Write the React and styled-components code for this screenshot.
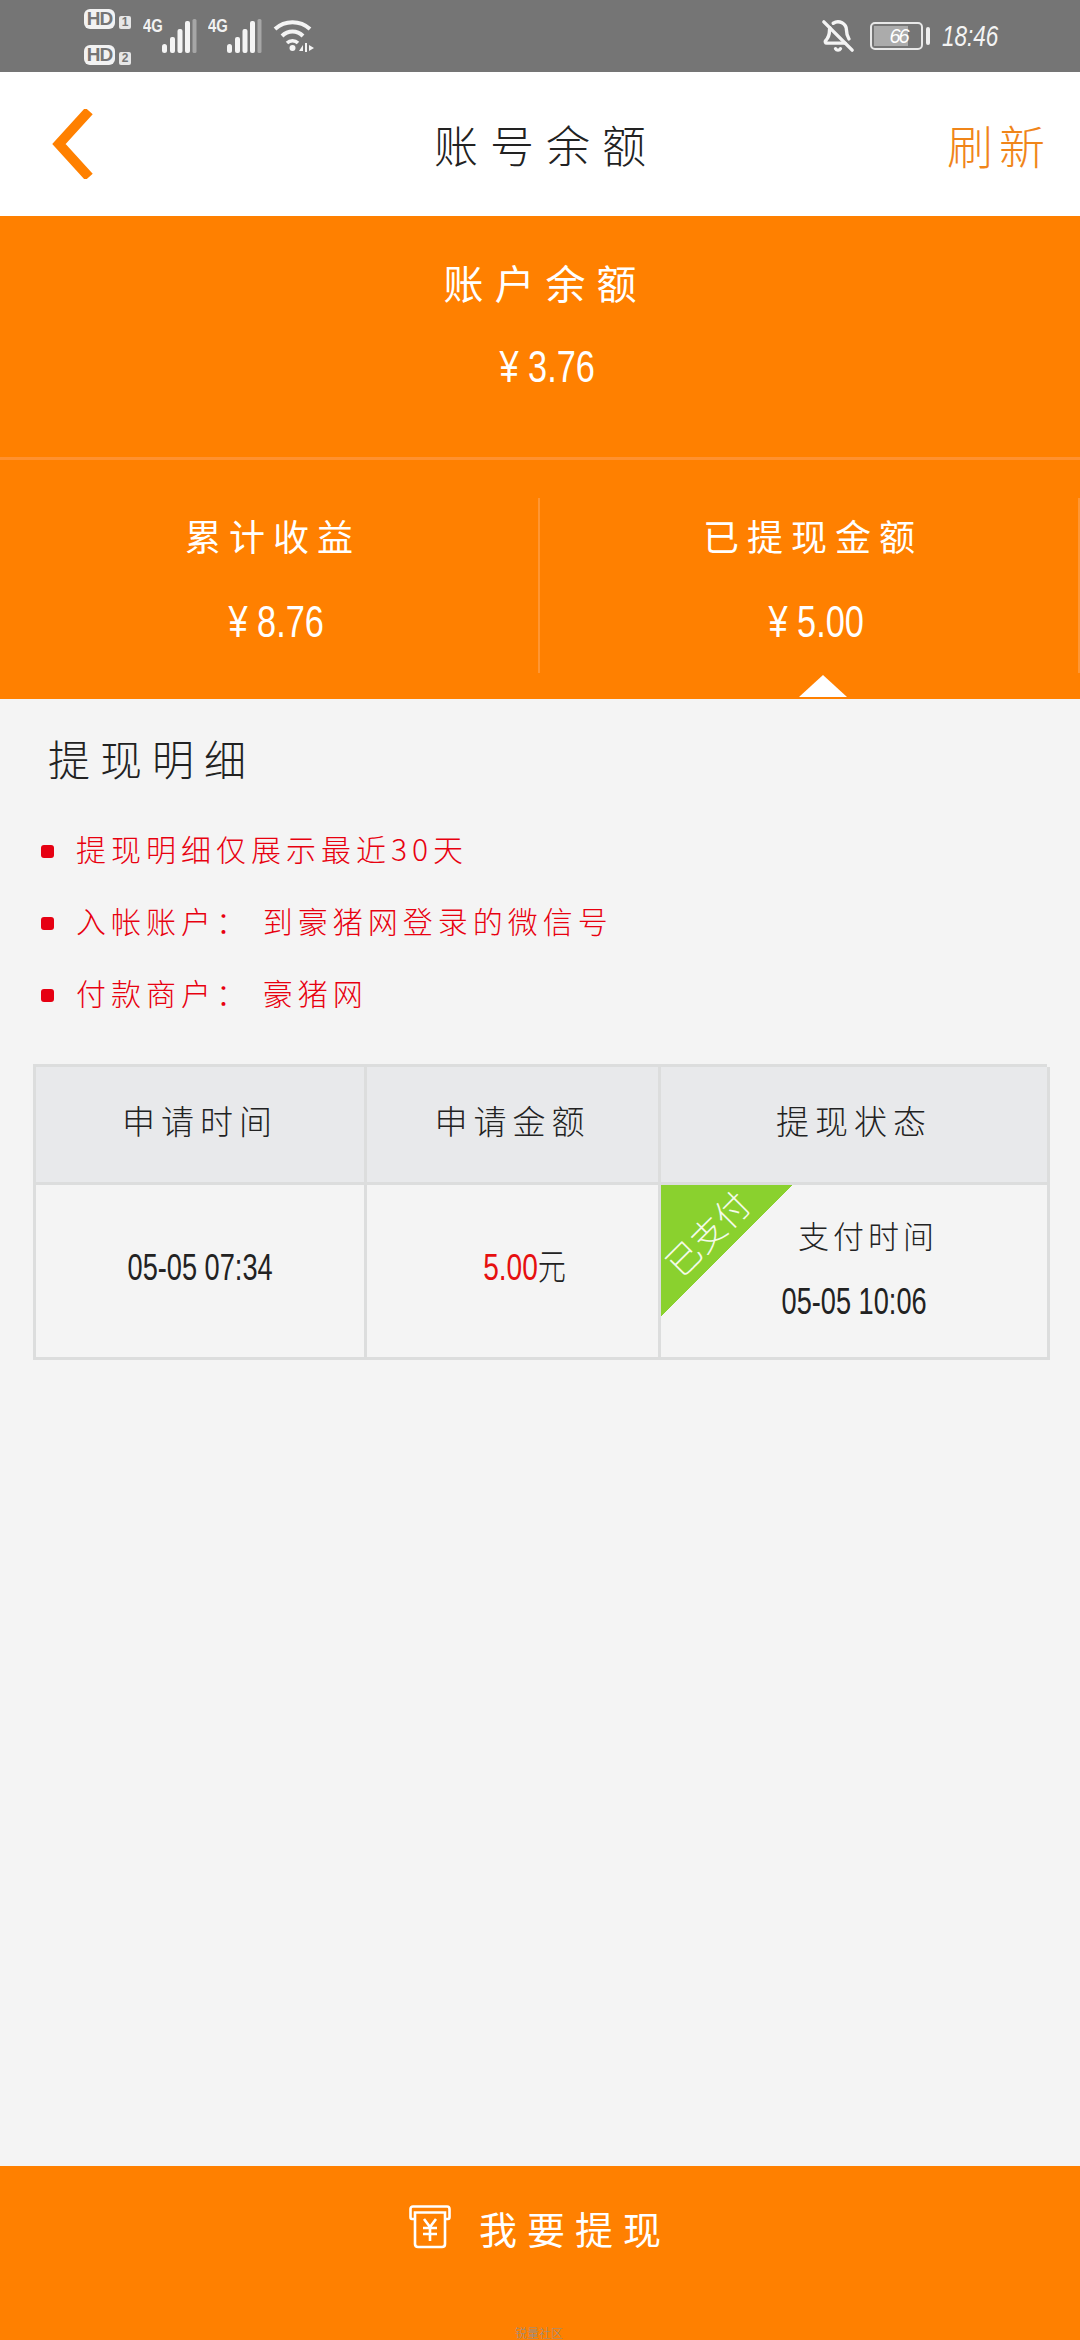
import React from 'react';
import styled, { createGlobalStyle } from 'styled-components';
import { BellOff } from 'lucide-react';

const ORANGE = '#ff8000';
const CJK = `"Noto Sans CJK SC", "Noto Sans", sans-serif`;
const LATIN = `"Liberation Sans", "Noto Sans CJK SC", sans-serif`;

const GlobalStyle = createGlobalStyle`
  html, body { margin: 0; padding: 0; background: #f4f4f4; }
  * { box-sizing: border-box; }
`;

const Page = styled.div`
  position: relative;
  width: 1080px;
  height: 2340px;
  display: flex;
  flex-direction: column;
  overflow: hidden;
  background: #f4f4f4;
  font-family: ${CJK};
  font-weight: 300;
  color: #222;
`;

const StatusBar = styled.div`
  height: 72px;
  flex: none;
  display: flex;
  align-items: center;
  justify-content: space-between;
  padding: 0 85px 0 84px;
  background: #757575;
  color: #fff;
`;

const StatusGroup = styled.div`
  display: flex;
  align-items: center;
`;

const SimColumn = styled.div`
  display: flex;
  flex-direction: column;
  gap: 16px;
  margin: 2px 12px 0 0;
`;

const SimRow = styled.div`
  display: flex;
  align-items: flex-end;
  gap: 4px;
`;

const HdBadge = styled.span`
  width: 31px;
  height: 20px;
  border-radius: 6px;
  background: #f2f2f2;
  color: #757575;
  font: 700 19px/20px "Liberation Sans", sans-serif;
  letter-spacing: -1px;
  text-align: center;
`;

const SimNumber = styled.span`
  width: 12px;
  height: 13px;
  border-radius: 2px;
  background: #e6e6e6;
  color: #757575;
  font: 700 12px/13px "Liberation Sans", sans-serif;
  text-align: center;
`;

const Signal = styled.div`
  display: flex;
  align-items: flex-start;
  margin-right: 10px;
`;

const NetLabel = styled.span`
  width: 19px;
  transform: scaleX(0.78);
  transform-origin: left top;
  font: 700 19px/16px ${LATIN};
  color: #f2f2f2;
`;

const Bell = styled(BellOff)`
  margin-right: 15px;
`;

const Battery = styled.div`
  width: 53px;
  height: 28px;
  padding: 2px;
  border: 2px solid #e8e8e8;
  border-radius: 5px;
`;

const BatteryFill = styled.div`
  height: 100%;
  width: ${p => p.level}%;
  background: #ababab;
  color: #fff;
  font: italic 20px/20px ${LATIN};
  letter-spacing: -2px;
  text-align: right;
`;

const BatteryNub = styled.div`
  width: 4px;
  height: 18px;
  margin: 0 12px 0 3px;
  border-radius: 2px;
  background: #eee;
`;

const Clock = styled.span`
  width: 53px;
  white-space: nowrap;
  transform: scaleX(0.75);
  transform-origin: left center;
  font: italic 300 30px/1 ${LATIN};
  color: #f4f4f4;
`;

const Header = styled.header`
  height: 144px;
  flex: none;
  display: grid;
  grid-template-columns: 1fr auto 1fr;
  align-items: center;
  padding: 0 33px;
  background: #fff;
`;

const BackSvg = styled.svg`
  margin-left: 19px;
  display: block;
`;

const PageTitle = styled.h1`
  margin: 0;
  padding-left: 12px;
  font-size: 44px;
  font-weight: 300;
  letter-spacing: 12px;
  color: #222;
`;

const Refresh = styled.span`
  justify-self: end;
  margin-right: -4px;
  font-size: 46px;
  letter-spacing: 6px;
  color: #f08519;
`;

const Summary = styled.section`
  flex: none;
  background: ${ORANGE};
  color: #fff;
`;

const Balance = styled.div`
  height: 241px;
  padding-top: 37px;
  display: flex;
  flex-direction: column;
  align-items: center;
`;

const SummaryLabel = styled.div`
  font-size: ${p => (p.big ? 40 : 36)}px;
  font-weight: 400;
  line-height: ${p => (p.big ? 58 : 52)}px;
  letter-spacing: ${p => (p.big ? 11 : 8)}px;
  padding-left: ${p => (p.big ? 11 : 8)}px;
`;

const SummaryValue = styled.div`
  margin: ${p => (p.big ? 34 : 39)}px 0 0 14px;
  transform: scaleX(0.78);
  font: 400 44px/44px ${LATIN};
`;

const Stats = styled.div`
  height: 242px;
  padding-top: 38px;
  border-top: 3px solid #ff9130;
  display: grid;
  grid-template-columns: 540px 540px;
  align-items: start;
`;

const Stat = styled.div`
  position: relative;
  height: 175px;
  padding-top: 11px;
  display: flex;
  flex-direction: column;
  align-items: center;
  border-right: 2px solid #ff9633;
`;

const ActivePointer = styled.div`
  position: absolute;
  left: 259px;
  top: 177px;
  width: 0;
  height: 0;
  border-left: 24px solid transparent;
  border-right: 24px solid transparent;
  border-bottom: 22px solid #fff;
`;

const Details = styled.main`
  flex: 1;
  padding: 0 33px;
`;

const DetailsTitle = styled.h2`
  margin: 29px 0 0 15px;
  font-size: 42px;
  line-height: 60px;
  font-weight: 300;
  letter-spacing: 10px;
  color: #222;
`;

const NoteList = styled.ul`
  margin: 24px 0 0;
  padding: 0;
  list-style: none;
`;

const Note = styled.li`
  height: 72px;
  display: flex;
  align-items: center;
  gap: 22px;
  padding-left: 8px;
  white-space: pre;
  font-size: 30px;
  letter-spacing: 5px;
  color: #e8000f;
`;

const NoteDot = styled.span`
  width: 13px;
  height: 13px;
  flex: none;
  margin-top: 6px;
  border-radius: 3px;
  background: #e60012;
`;

const Table = styled.div`
  margin-top: 36px;
  display: grid;
  grid-template-columns: 331px 294px 389px;
  grid-template-rows: 118px 175px;
  border-top: 3px solid #dcdddd;
  border-left: 3px solid #dcdddd;
`;

const Cell = styled.div`
  position: relative;
  display: flex;
  flex-direction: column;
  align-items: center;
  justify-content: center;
  padding-bottom: ${p => (p.head ? 10 : 6)}px;
  border-right: 3px solid #dcdddd;
  border-bottom: 3px solid #dcdddd;
  background: ${p => (p.head ? '#e8e9eb' : '#f4f4f4')};
`;

const HeadText = styled.span`
  font-size: 33px;
  letter-spacing: 6px;
  color: #222;
`;

const DataText = styled.span`
  white-space: nowrap;
  transform: scaleX(0.755);
  font: 300 36px/34px ${LATIN};
  color: #222;
`;

const Amount = styled.span`
  padding-left: 32px;
  white-space: nowrap;
  transform: scaleX(0.78);
  font: 300 36px/34px ${LATIN};
  color: #222;
`;

const AmountNumber = styled.span`
  color: #e60f0f;
`;

const PayTimeLabel = styled.span`
  margin: 0 0 32px 28px;
  font-size: 31px;
  line-height: 36px;
  letter-spacing: 4px;
  color: #222;
`;

const PaidCorner = styled.div`
  position: absolute;
  left: 0;
  top: 0;
  width: 132px;
  height: 132px;
  background: linear-gradient(135deg, #8ad12e 50%, transparent 50%);
`;

const PaidText = styled.span`
  position: absolute;
  left: -5px;
  top: 31px;
  width: 102px;
  white-space: nowrap;
  text-align: center;
  transform: rotate(-45deg);
  font-size: 34px;
  line-height: 34px;
  color: #f4fbe9;
`;

const Footer = styled.footer`
  height: 174px;
  flex: none;
  padding-top: 36px;
  display: flex;
  justify-content: center;
  align-items: flex-start;
  gap: 28px;
  background: ${ORANGE};
  color: #fff;
`;

const FooterIcon = styled.svg`
  margin-top: 3px;
`;

const FooterText = styled.span`
  font-size: 38px;
  font-weight: 400;
  line-height: 52px;
  letter-spacing: 10px;
`;

const Watermark = styled.span`
  position: absolute;
  left: 515px;
  top: 2325px;
  font-size: 12px;
  line-height: 15px;
  color: #8c9096;
`;

const SignalBars = () => (
  <svg width="36" height="36" viewBox="0 0 36 36">
    <g fill="#f4f4f4">
      <rect x="0" y="26" width="5" height="9" rx="2.5" />
      <rect x="8" y="19" width="5" height="16" rx="2" />
      <rect x="15.5" y="11" width="5" height="24" rx="2" />
      <rect x="23" y="3" width="5" height="32" rx="2" />
    </g>
    <rect x="30.5" y="1" width="4" height="34" rx="1.5" fill="#a6a6a6" />
  </svg>
);

const WifiIcon = () => (
  <svg width="42" height="34" viewBox="0 0 42 34" fill="none" stroke="#f4f4f4" strokeWidth="4">
    <path d="M2 10C12 1 27 1 37 10" />
    <path d="M9 17C15 11 24 11 30 17" />
    <path d="M14 24C17 21 22 21 25 24" strokeWidth="3.5" />
    <circle cx="19.5" cy="29" r="3" fill="#f4f4f4" stroke="none" />
    <path d="M30 26L26 32H30ZM36 26V32L41 29Z" fill="#f4f4f4" stroke="none" />
    <rect x="32" y="24" width="2" height="9" fill="#f4f4f4" stroke="none" />
  </svg>
);

const BackIcon = () => (
  <BackSvg width="42" height="70" viewBox="0 0 42 70" fill="none">
    <path d="M37 2L7 35L37 68" stroke={ORANGE} strokeWidth="10" />
  </BackSvg>
);

const WithdrawIcon = () => (
  <FooterIcon width="42" height="44" viewBox="0 0 42 44" fill="none" stroke="#fff" strokeWidth="2.6">
    <path d="M6 14H3C2 14 1.5 13 1.5 12V4C1.5 2.5 2.5 1.5 4 1.5H38C39.5 1.5 40.5 2.5 40.5 4V12C40.5 13 40 14 39 14H36" />
    <path d="M6 7.5H36V39C36 41 35 42 33 42H9C7 42 6 41 6 39Z" />
    <path d="M15 14L21 22L27 14M14 23H28M14 29H28M21 22V36" />
  </FooterIcon>
);

const Sim = ({ number }) => (
  <SimRow>
    <HdBadge>HD</HdBadge>
    <SimNumber>{number}</SimNumber>
  </SimRow>
);

const notes = ['提现明细仅展示最近30天', '入帐账户： 到豪猪网登录的微信号', '付款商户： 豪猪网'];

const App = () => (
  <Page>
    <GlobalStyle />
    <StatusBar>
      <StatusGroup>
        <SimColumn>
          <Sim number="1" />
          <Sim number="2" />
        </SimColumn>
        <Signal>
          <NetLabel>4G</NetLabel>
          <SignalBars />
        </Signal>
        <Signal>
          <NetLabel>4G</NetLabel>
          <SignalBars />
        </Signal>
        <WifiIcon />
      </StatusGroup>
      <StatusGroup>
        <Bell size={34} color="#f4f4f4" strokeWidth={2.4} />
        <Battery>
          <BatteryFill level={75}>66</BatteryFill>
        </Battery>
        <BatteryNub />
        <Clock>18:46</Clock>
      </StatusGroup>
    </StatusBar>

    <Header>
      <BackIcon />
      <PageTitle>账号余额</PageTitle>
      <Refresh>刷新</Refresh>
    </Header>

    <Summary>
      <Balance>
        <SummaryLabel big>账户余额</SummaryLabel>
        <SummaryValue big>¥ 3.76</SummaryValue>
      </Balance>
      <Stats>
        <Stat>
          <SummaryLabel>累计收益</SummaryLabel>
          <SummaryValue>¥ 8.76</SummaryValue>
        </Stat>
        <Stat>
          <SummaryLabel>已提现金额</SummaryLabel>
          <SummaryValue>¥ 5.00</SummaryValue>
          <ActivePointer />
        </Stat>
      </Stats>
    </Summary>

    <Details>
      <DetailsTitle>提现明细</DetailsTitle>
      <NoteList>
        {notes.map(note => (
          <Note key={note}>
            <NoteDot />
            {note}
          </Note>
        ))}
      </NoteList>
      <Table>
        <Cell head><HeadText>申请时间</HeadText></Cell>
        <Cell head><HeadText>申请金额</HeadText></Cell>
        <Cell head><HeadText>提现状态</HeadText></Cell>
        <Cell><DataText>05-05 07:34</DataText></Cell>
        <Cell>
          <Amount><AmountNumber>5.00</AmountNumber>元</Amount>
        </Cell>
        <Cell>
          <PaidCorner>
            <PaidText>已支付</PaidText>
          </PaidCorner>
          <PayTimeLabel>支付时间</PayTimeLabel>
          <DataText>05-05 10:06</DataText>
        </Cell>
      </Table>
    </Details>

    <Footer>
      <WithdrawIcon />
      <FooterText>我要提现</FooterText>
    </Footer>
    <Watermark>锐量社区</Watermark>
  </Page>
);

export default App;
